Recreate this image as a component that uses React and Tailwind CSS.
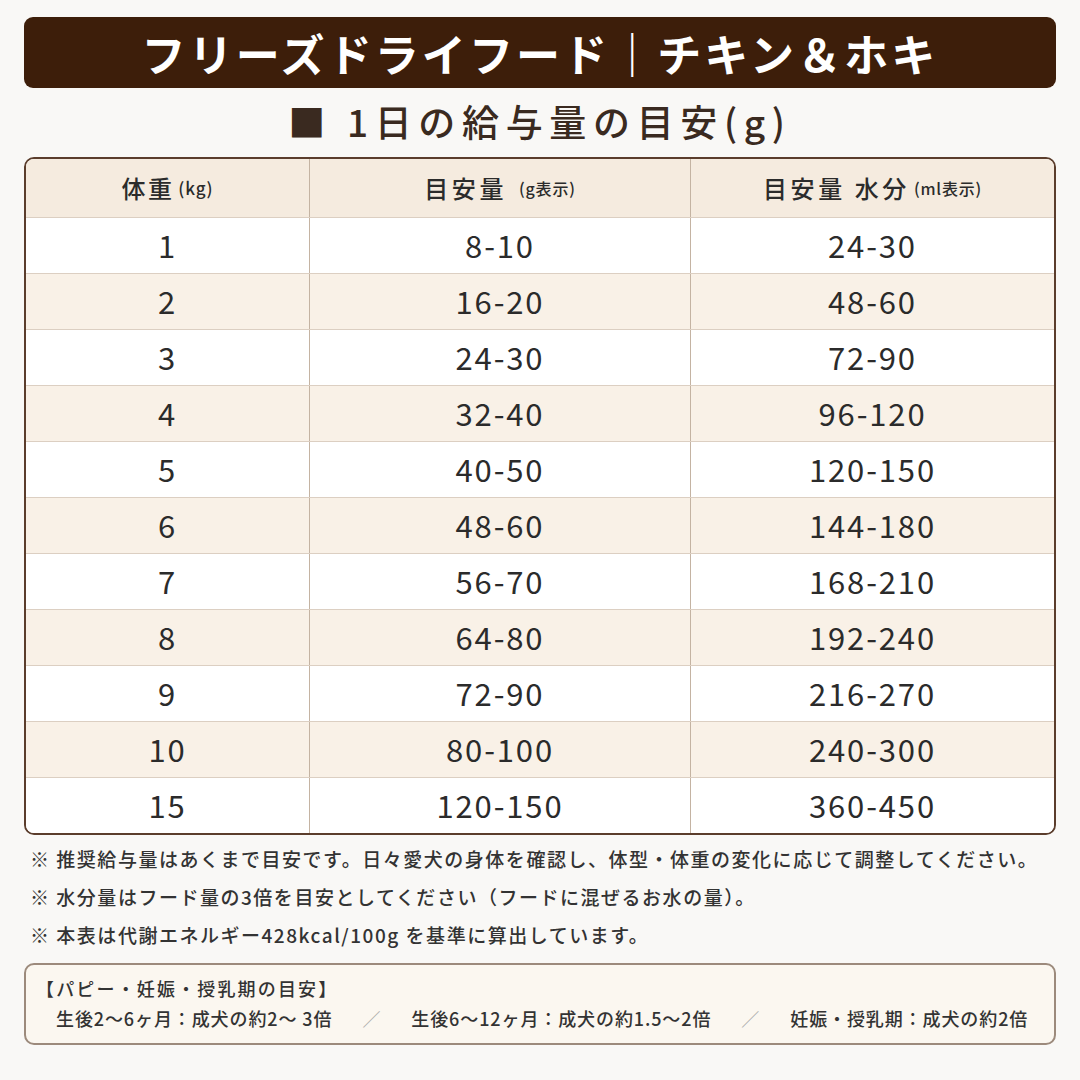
// Feeding guide table for freeze-dried food

const rows = [
    ["1", "8-10", "24-30"],
    ["2", "16-20", "48-60"],
    ["3", "24-30", "72-90"],
    ["4", "32-40", "96-120"],
    ["5", "40-50", "120-150"],
    ["6", "48-60", "144-180"],
    ["7", "56-70", "168-210"],
    ["8", "64-80", "192-240"],
    ["9", "72-90", "216-270"],
    ["10", "80-100", "240-300"],
    ["15", "120-150", "360-450"],
]

const notes = [
    "※ 推奨給与量はあくまで目安です。日々愛犬の身体を確認し、体型・体重の変化に応じて調整してください。",
    "※ 水分量はフード量の3倍を目安としてください（フードに混ぜるお水の量）。",
    "※ 本表は代謝エネルギー428kcal/100g を基準に算出しています。",
]

export default function App() {
    return (
        <div className="w-[1080px] h-[1080px] bg-[#f9f8f6] px-[24px] pt-[17px] text-[#2b2b2b]" style={{ fontFamily: '"Noto Sans CJK JP", "Noto Sans", sans-serif' }}>
            {/* Title bar */}
            <div className="h-[71px] rounded-[9px] bg-[#3d1e0a] flex items-center justify-center">
                <h1 className="text-white font-bold text-[44px] tracking-[0.07em] leading-none">フリーズドライフード｜チキン＆ホキ</h1>
            </div>

            <div className="h-[66px] flex items-center justify-center">
                <h2 className="text-[37px] font-medium tracking-[0.18em] text-[#3a2a20] leading-none">■ 1日の給与量の目安(g)</h2>
            </div>

            {/* Table */}
            <div className="mt-[3px] border-2 border-[#5b3d2c] rounded-[10px] overflow-hidden bg-white">
                <div className="grid grid-cols-[283px_381px_1fr] h-[58px] bg-[#f5ebdf] text-[24px] font-medium">
                    <div className="flex items-center justify-center tracking-[0.1em]">体重<span className="text-[17px] tracking-[0.05em] ml-1">(kg)</span></div>
                    <div className="flex items-center justify-center border-l border-[#c4b3a2] tracking-[0.15em]">目安量<span className="text-[16px] tracking-[0.05em] ml-3">(g表示)</span></div>
                    <div className="flex items-center justify-center border-l border-[#c4b3a2] tracking-[0.15em]">目安量 水分<span className="text-[16px] tracking-[0.05em] ml-1">(ml表示)</span></div>
                </div>
                {rows.map((r, i) => (
                    <div key={r[0]} className={`grid grid-cols-[283px_381px_1fr] h-[56px] border-t border-[#dccfc2] text-[31px] tracking-[0.06em] ${i % 2 === 1 ? "bg-[#f9f1e7]" : "bg-white"}`}>
                        <div className="flex items-center justify-center">{r[0]}</div>
                        <div className="flex items-center justify-center border-l border-[#c4b3a2]">{r[1]}</div>
                        <div className="flex items-center justify-center border-l border-[#c4b3a2]">{r[2]}</div>
                    </div>
                ))}
            </div>

            {/* Notes */}
            <div className="flex flex-col gap-[14px] mt-[12px] pl-[6px] text-[19px] font-medium tracking-[0.08em] text-[#333] leading-[24px] whitespace-nowrap">
                {notes.map((n) => (
                    <p key={n}>{n}</p>
                ))}
            </div>

            {/* Puppy box */}
            <div className="mt-[16px] h-[82px] border-2 border-[#9c8a7c] rounded-[10px] bg-[#fbf7f0] px-[10px] pt-[10px] text-[18px] font-medium text-[#333] whitespace-nowrap">
                <p className="leading-[26px] tracking-[0.12em]">【パピー・妊娠・授乳期の目安】</p>
                <div className="flex items-center pl-[20px] mt-[3px] leading-[28px] tracking-[0.05em]">
                    <span>生後2～6ヶ月：成犬の約2～ 3倍</span>
                    <span className="text-[#aaa] mx-[30px]">／</span>
                    <span>生後6～12ヶ月：成犬の約1.5～2倍</span>
                    <span className="text-[#aaa] mx-[30px]">／</span>
                    <span>妊娠・授乳期：成犬の約2倍</span>
                </div>
            </div>
        </div>
    )
}
